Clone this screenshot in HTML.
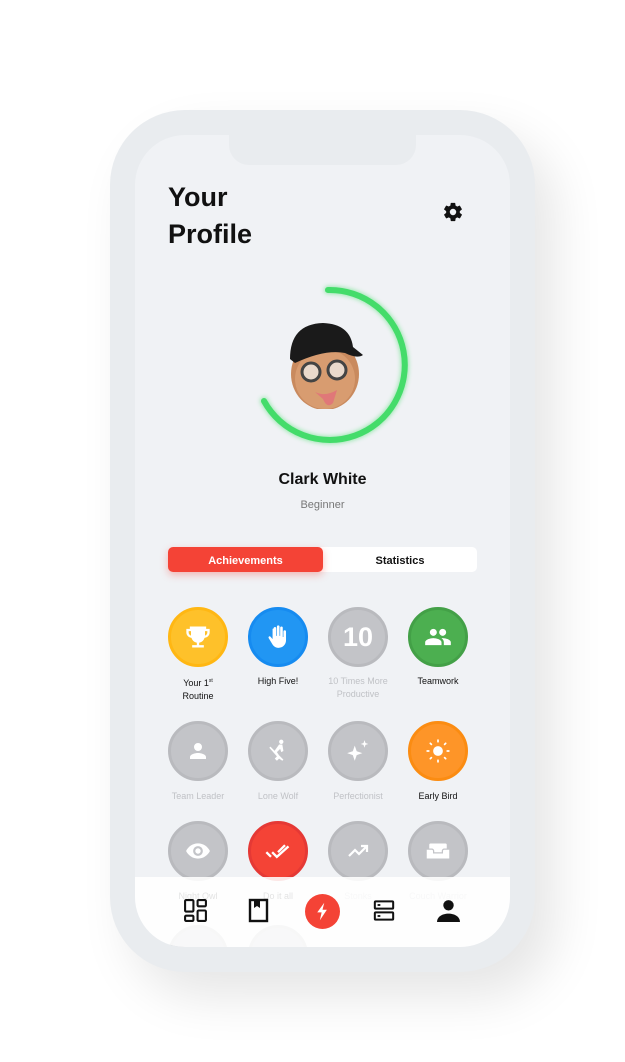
<!DOCTYPE html>
<html><head><meta charset="utf-8"><style>
*{margin:0;padding:0;box-sizing:border-box}
body{width:625px;height:1062px;background:#fff;position:relative;overflow:hidden;font-family:"Liberation Sans",sans-serif}
.frame{position:absolute;left:110px;top:110px;width:425px;height:862px;background:#e9ecef;border-radius:75px;box-shadow:20px 25px 50px rgba(0,0,0,.10)}
.screen{position:absolute;left:135px;top:135px;width:375px;height:812px;background:#f0f2f5;border-radius:50px;overflow:hidden}
.notch{position:absolute;left:94px;top:0;width:187px;height:30px;background:#e9ecef;border-radius:0 0 20px 20px}
.t{position:absolute;color:#111}
.c{position:absolute;width:60px;height:60px;border-radius:50%;display:flex;align-items:center;justify-content:center}
.g{background:#c3c4c8;border:3px solid #b9babe}
.lbl{position:absolute;width:90px;text-align:center;font-size:9px;line-height:13px;color:#111}
.lbl.d{color:#c0c2c6}
.nav{position:absolute;left:0;top:742px;width:375px;height:70px;background:rgba(255,255,255,.88)}
</style></head><body>
<div class="frame"></div>
<div class="screen">
<div class="notch"></div>
<div class="t" style="left:33px;top:44px;font-size:27px;font-weight:bold;line-height:37px">Your<br>Profile</div>
<svg style="position:absolute;left:307px;top:66px" width="22" height="22" viewBox="0 0 24 24"><path fill="#111" d="M19.4 13c.04-.3.06-.6.06-1s-.02-.7-.06-1l2.1-1.6c.2-.15.24-.42.12-.64l-2-3.460c-.12-.22-.39-.3-.61-.22l-2.5 1c-.52-.4-1.08-.73-1.69-.98l-.38-2.65A.5.5 0 0 0 14 2h-4c-.25 0-.46.18-.49.42l-.38 2.65c-.61.25-1.170.59-1.69.98l-2.5-1c-.23-.09-.49 0-.61.22l-2 3.46c-.13.22-.07.49.12.64L4.57 11c-.04.3-.07.7-.07 1s.03.7.07 1l-2.1 1.6c-.2.15-.25.42-.12.64l2 3.46c.12.22.39.3.61.22l2.5-1c.52.4 1.08.73 1.69.98l.38 2.65c.03.24.24.42.49.42h4c.25 0 .46-.18.49-.42l.38-2.65c.61-.25 1.17-.59 1.69-.98l2.5 1c.23.09.49 0 .61-.22l2-3.46c.12-.22.07-.49-.12-.64L19.4 13zM12 15.5a3.5 3.5 0 1 1 0-7 3.5 3.5 0 0 1 0 7z"/></svg>
<svg style="position:absolute;left:105px;top:140px" width="180" height="180" viewBox="0 0 180 180">
<defs><filter id="gl"><feGaussianBlur stdDeviation="2"/></filter></defs>
<path d="M88 15 A75 75 0 1 1 24 126" fill="none" stroke="#4cde6e" stroke-width="8" stroke-linecap="round" filter="url(#gl)" opacity=".5"/>
<path d="M88 15 A75 75 0 1 1 24 126" fill="none" stroke="#44dc6a" stroke-width="6" stroke-linecap="round"/>
</svg>
<svg style="position:absolute;left:150px;top:184px" width="80" height="90" viewBox="0 0 80 90">
<ellipse cx="40" cy="55" rx="34" ry="36" fill="#c98a5e"/>
<ellipse cx="40" cy="60" rx="30" ry="30" fill="#d89c70"/>
<path d="M5 40 Q5 5 38 4 Q65 5 68 28 L78 36 Q72 40 60 34 Q40 30 10 44 Z" fill="#1a1a1a"/>
<circle cx="26" cy="53" r="9" fill="#e9d9cc" stroke="#444" stroke-width="3"/>
<circle cx="52" cy="51" r="9" fill="#e9d9cc" stroke="#444" stroke-width="3"/>
<path d="M30 73 Q40 78 52 71 L48 84 Q42 90 38 80 Z" fill="#e07878"/>
</svg>
<div class="t" style="left:0;width:375px;text-align:center;top:336px;font-size:16px;font-weight:bold">Clark White</div>
<div class="t" style="left:0;width:375px;text-align:center;top:364px;font-size:11px;color:#777">Beginner</div>
<div style="position:absolute;left:33px;top:412px;width:309px;height:25px;background:#fff;border-radius:5px"></div>
<div style="position:absolute;left:33px;top:412px;width:155px;height:25px;background:#f44336;border-radius:5px;box-shadow:0 3px 8px rgba(244,67,54,.35);color:#fff;font-size:11px;font-weight:bold;text-align:center;line-height:25px;padding-top:2px">Achievements</div>
<div class="t" style="left:188px;top:414px;width:154px;font-size:11px;font-weight:bold;text-align:center;line-height:25px">Statistics</div>

<div class="c" style="left:33px;top:472px;background:#fec12a;border:3px solid #ffb713"><svg width="28" height="28" viewBox="0 0 24 24"><path fill="#fff" d="M5 3h14v2h3v3c0 2.5-2 4.5-4.4 4.7A6 6 0 0 1 13 16.9V19h4v2H7v-2h4v-2.1A6 6 0 0 1 6.4 12.7C4 12.5 2 10.5 2 8V5h3V3zM4 7v1c0 1.3.8 2.4 2 2.8V7H4zm14 0v3.8c1.2-.4 2-1.5 2-2.8V7h-2z"/></svg></div>
<div class="c" style="left:113px;top:472px;background:#2196f3;border:3px solid #168bf0"><svg width="26" height="26" viewBox="0 0 24 24"><path fill="#fff" d="M8 4a1.2 1.2 0 0 1 2.4 0v7h.6V2.5a1.2 1.2 0 0 1 2.4 0V11h.6V3.5a1.2 1.2 0 0 1 2.4 0V12h.6V7a1.2 1.2 0 0 1 2.4 0v8c0 4-3 7-7 7-3 0-4.5-1.5-6-4l-3-5c-.6-1 .6-2.2 1.6-1.4L7 14V4.5z"/></svg></div>
<div class="c g" style="left:193px;top:472px;color:#fff;font-size:27px;font-weight:bold">10</div>
<div class="c" style="left:273px;top:472px;background:#4caf50;border:3px solid #43a047"><svg width="28" height="28" viewBox="0 0 24 24"><path fill="#fff" d="M16 11a3 3 0 1 0 0-6 3 3 0 0 0 0 6zm-8 0a3 3 0 1 0 0-6 3 3 0 0 0 0 6zm0 2c-2.3 0-7 1.2-7 3.5V19h14v-2.5C15 14.2 10.3 13 8 13zm8 0c-.3 0-.6 0-1 .1 1.2.8 2 2 2 3.4V19h6v-2.5c0-2.3-4.7-3.5-7-3.5z"/></svg></div>
<div class="lbl" style="left:18px;top:540px">Your 1<sup style="font-size:5px">st</sup><br>Routine</div>
<div class="lbl" style="left:98px;top:540px">High Five!</div>
<div class="lbl d" style="left:178px;top:540px">10 Times More<br>Productive</div>
<div class="lbl" style="left:258px;top:540px">Teamwork</div>

<div class="c g" style="left:33px;top:586px"><svg width="24" height="24" viewBox="0 0 24 24"><path fill="#fff" d="M12 12a4 4 0 1 0 0-8 4 4 0 0 0 0 8zm0 2c-2.7 0-8 1.3-8 4v2h16v-2c0-2.7-5.3-4-8-4z"/></svg></div>
<div class="c g" style="left:113px;top:586px"><svg width="26" height="26" viewBox="0 0 24 24"><circle cx="15" cy="3.5" r="2" fill="#fff"/><path fill="#fff" d="M13 6h3l1 6-2 1-1-3-3 3 2 3-2 1-3-4zM4 9l1-1 12 12-1 1-3-2-2 2-2-2 2-2z"/></svg></div>
<div class="c g" style="left:193px;top:586px"><svg width="26" height="26" viewBox="0 0 24 24"><path fill="#fff" d="M9 7l1.8 5.2L16 14l-5.2 1.8L9 21l-1.8-5.2L2 14l5.2-1.8zM18 2l.9 2.6 2.6.9-2.6.9L18 9l-.9-2.6-2.6-.9 2.6-.9z"/></svg></div>
<div class="c" style="left:273px;top:586px;background:#fe9528;border:3px solid #fb8c12"><svg width="26" height="26" viewBox="0 0 24 24"><circle cx="12" cy="12" r="4.5" fill="#fff"/><g stroke="#fff" stroke-width="1.6" stroke-linecap="round"><path d="M12 2v1.5M12 20.5V22M2 12h1.5M20.5 12H22M4.9 4.9l1 1M18.1 18.1l1 1M4.9 19.1l1-1M18.1 5.9l1-1"/></g></svg></div>
<div class="lbl d" style="left:18px;top:655px">Team Leader</div>
<div class="lbl d" style="left:98px;top:655px">Lone Wolf</div>
<div class="lbl d" style="left:178px;top:655px">Perfectionist</div>
<div class="lbl" style="left:258px;top:655px">Early Bird</div>

<div class="c g" style="left:33px;top:686px"><svg width="26" height="26" viewBox="0 0 24 24"><path fill="#fff" d="M12 5C7 5 3 8 1 12c2 4 6 7 11 7s9-3 11-7c-2-4-6-7-11-7zm0 11.5a4.5 4.5 0 1 1 0-9 4.5 4.5 0 0 1 0 9zm0-7a2.5 2.5 0 1 0 0 5 2.5 2.5 0 0 0 0-5z"/></svg></div>
<div class="c" style="left:113px;top:686px;background:#f44336;border:3px solid #e53935"><svg width="28" height="28" viewBox="0 0 24 24"><path fill="none" stroke="#fff" stroke-width="2" d="M2 13l4 4M7 13l4 4 10-9M12 13l6-6"/></svg></div>
<div class="c g" style="left:193px;top:686px"><svg width="24" height="24" viewBox="0 0 24 24"><path fill="none" stroke="#fff" stroke-width="2.2" d="M3 17l6-6 4 4 7-7M15 7h6v6" /></svg></div>
<div class="c g" style="left:273px;top:686px"><svg width="30" height="30" viewBox="0 0 24 24"><path fill="#fff" d="M6 6h12a1 1 0 0 1 1 1v3h-2a2 2 0 0 0-2 2v1H9v-1a2 2 0 0 0-2-2H5V7a1 1 0 0 1 1-1zM3 11h4a1 1 0 0 1 1 1v2h8v-2a1 1 0 0 1 1-1h4v7H3z"/></svg></div>
<div class="lbl" style="left:18px;top:755px">Night Owl</div>
<div class="lbl" style="left:98px;top:755px">Do it all</div>
<div class="lbl d" style="left:178px;top:755px">Stonks</div>
<div class="lbl d" style="left:258px;top:755px">Couch Warrior</div>
<div class="c g" style="left:33px;top:790px"></div>
<div class="c g" style="left:113px;top:790px"></div>

<div class="nav"></div>
<svg style="position:absolute;left:48px;top:763px" width="25" height="25" viewBox="0 0 24 24"><g fill="none" stroke="#111" stroke-width="2"><rect x="2" y="2" width="8" height="11" rx="1"/><rect x="14" y="2" width="8" height="6" rx="1"/><rect x="2" y="17" width="8" height="5" rx="1"/><rect x="14" y="12" width="8" height="10" rx="1"/></g></svg>
<svg style="position:absolute;left:113px;top:763px" width="22" height="25" viewBox="0 0 22 25"><rect x="2" y="2" width="17" height="21" fill="none" stroke="#111" stroke-width="2.4"/><path d="M6 2h6v8l-3-2-3 2z" fill="#111"/></svg>
<div style="position:absolute;left:170px;top:759px;width:35px;height:35px;border-radius:50%;background:#f44336"></div>
<svg style="position:absolute;left:177px;top:765px" width="21" height="23" viewBox="0 0 24 24"><path fill="#fff" d="M14 2L6 13h5l-2 9 8-12h-5z"/></svg>
<svg style="position:absolute;left:238px;top:764px" width="22" height="23" viewBox="0 0 24 24"><g fill="none" stroke="#111" stroke-width="2.2"><rect x="2" y="2" width="20" height="8" rx="1"/><rect x="2" y="14" width="20" height="8" rx="1"/></g><rect x="5" y="5" width="3" height="2" fill="#111"/><rect x="5" y="17" width="3" height="2" fill="#111"/></svg>
<svg style="position:absolute;left:301px;top:763px" width="25" height="25" viewBox="0 0 24 24"><circle cx="12" cy="7" r="5" fill="#111"/><path fill="#111" d="M1 23c0-5 5-8 11-8s11 3 11 8z"/></svg>
</div>
</body></html>
